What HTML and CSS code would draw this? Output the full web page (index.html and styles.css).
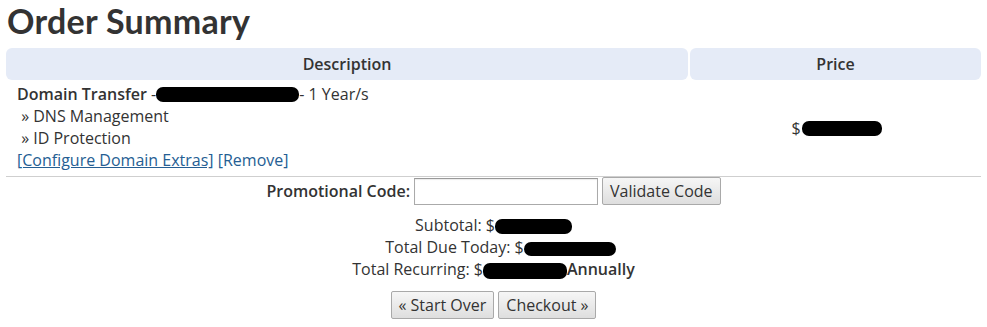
FILE: index.html
```html
<!DOCTYPE html>
<html lang="en">
<head>
<meta charset="utf-8">
<title>Order Summary</title>
<link rel="stylesheet" href="styles.css">
</head>
<body>
<div class="page">
  <h1 class="title">Order Summary</h1>
  <div class="cart">
    <div class="th">Description</div>
    <div class="th">Price</div>
    <div class="td desc">
      <div class="line"><strong>Domain Transfer</strong> -<span class="redact r-domain"></span>- 1 Year/s</div>
      <div class="line">&nbsp;» DNS Management</div>
      <div class="line">&nbsp;» ID Protection</div>
      <div class="line"><a href="#" class="link underline">[Configure Domain Extras]</a> <a href="#" class="link">[Remove]</a></div>
    </div>
    <div class="td price">$<span class="redact r-price"></span></div>
  </div>
  <div class="promo">
    <label class="promo-label" for="code">Promotional Code:</label>
    <input class="promo-input" id="code" type="text">
    <button class="btn" type="button">Validate Code</button>
  </div>
  <div class="totals">
    <div class="line">Subtotal: $<span class="redact r-sub"></span></div>
    <div class="line">Total Due Today: $<span class="redact r-due"></span></div>
    <div class="line">Total Recurring: $<span class="redact r-rec"></span><strong>Annually</strong></div>
  </div>
  <div class="actions">
    <button class="btn" type="button">« Start Over</button>
    <button class="btn" type="button">Checkout »</button>
  </div>
</div>
</body>
</html>
```

FILE: styles.css
```css
html, body {
  margin: 0;
  padding: 0;
  background: #fff;
}
body {
  font-family: "Open Sans", "DejaVu Sans", sans-serif;
  font-size: 16px;
  color: #333;
}
.page {
  padding: 0 6px;
}
.title {
  margin: 0;
  padding: 2px 0 0 1px;
  height: 46px;
  font-family: "Lato", "Open Sans", sans-serif;
  font-weight: 700;
  font-size: 34px;
  line-height: 38px;
  color: #333;
  letter-spacing: 0.3px;
}
.cart {
  display: grid;
  grid-template-columns: 682px 1fr;
  column-gap: 2px;
}
.th {
  background: #e5ebf7;
  border-radius: 6px;
  height: 32px;
  line-height: 32px;
  text-align: center;
  font-weight: 600;
}
.td {
  border-bottom: 1px solid #cfcfcf;
}
.desc {
  padding: 3px 10px 5px 11px;
  line-height: 22px;
}
.desc strong {
  font-weight: 600;
}
.price {
  display: flex;
  align-items: center;
  justify-content: center;
  margin-left: -2px;
  padding-left: 4px;
}
.link {
  color: #255e93;
  text-decoration: none;
}
.link.underline {
  text-decoration: underline;
}
.redact {
  display: inline-block;
  background: #000;
  border-radius: 7px;
  vertical-align: middle;
}
.r-domain { width: 143px; height: 15px; margin-top: -3px; }
.r-price { width: 80px; height: 15px; margin-left: 1px; }
.r-sub { width: 77px; height: 15px; }
.r-due { width: 92px; height: 14px; margin-right: -14px; }
.r-rec { width: 84px; height: 16px; }
.promo {
  display: flex;
  justify-content: center;
  align-items: center;
  gap: 4px;
  height: 28px;
}
.promo-label {
  font-weight: 600;
}
.promo-input {
  width: 184px;
  height: 27px;
  box-sizing: border-box;
  border: 1px solid #aaa;
  border-top-color: #999;
  box-shadow: inset 0 1px 1px rgba(0,0,0,0.08);
  margin: 0;
  padding: 2px 4px;
  font: inherit;
}
.btn {
  font-family: "Open Sans", "DejaVu Sans", sans-serif;
  font-size: 16px;
  color: #333;
  height: 28px;
  padding: 0 7px;
  margin: 0;
  background: linear-gradient(#f6f6f6, #dedede);
  border: 1px solid #a9a9a9;
  border-radius: 2px;
  line-height: 24px;
  cursor: pointer;
}
.totals {
  text-align: center;
  line-height: 22px;
  padding-top: 9px;
}
.totals strong {
  font-weight: 600;
}
.actions {
  display: flex;
  justify-content: center;
  gap: 4px;
  padding-top: 11px;
}
```
